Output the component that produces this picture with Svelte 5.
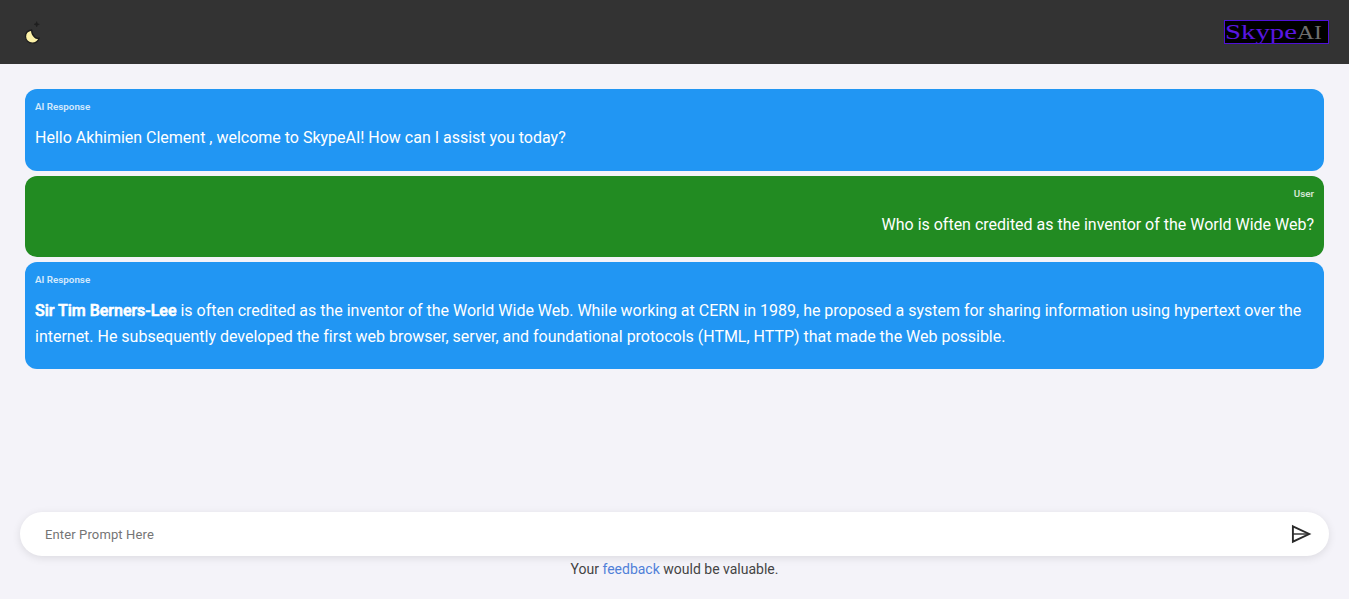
<script>
  const messages = [
    { role: 'ai', label: 'AI Response', html: 'Hello Akhimien Clement , welcome to SkypeAI! How can I assist you today?' },
    { role: 'user', label: 'User', html: 'Who is often credited as the inventor of the World Wide Web?' },
    { role: 'ai', label: 'AI Response', html: '<strong>Sir Tim Berners-Lee</strong> is often credited as the inventor of the World Wide Web. While working at CERN in 1989, he proposed a system for sharing information using hypertext over the internet. He subsequently developed the first web browser, server, and foundational protocols (HTML, HTTP) that made the Web possible.' }
  ];
</script>

<div class="page">
  <header class="topbar">
    <svg class="mark" width="20" height="26" viewBox="0 0 20 26" aria-hidden="true">
      <path d="M14.7 1.6 L15.4 3.6 L17.4 4.3 L15.4 5 L14.7 7 L14 5 L12 4.3 L14 3.6 Z" fill="#1f1f1f" stroke="#1f1f1f" stroke-width=".5"/>
      <path d="M9.7 10 C6 10.5 3.5 13 3.5 16.5 C3.5 20.3 6.5 23.2 10.3 23.2 C13.5 23.2 16.2 21 17.2 18 C15.5 18.6 13.8 18.2 12.6 17 C10.8 15.2 9.5 12.8 9.7 10 Z" fill="#fdf2a8" stroke="#1d1d1d" stroke-width="1.3" stroke-linejoin="round"/>
    </svg>
    <div class="brand"><span class="wordmark"><span class="sk">Skype</span><span class="ai">AI</span></span></div>
  </header>

  <main class="chat">
    {#each messages as m}
      <article class="bubble {m.role}">
        <div class="label">{m.label}</div>
        <p class="body">{@html m.html}</p>
      </article>
    {/each}
  </main>

  <footer class="composer">
    <div class="inputbar">
      <input type="text" placeholder="Enter Prompt Here" />
      <button type="button" aria-label="Send">
        <svg width="24" height="24" viewBox="0 0 24 24" aria-hidden="true">
          <path d="M3.9 4.3 L20.2 12 L3.9 19.7 Z" fill="none" stroke="#2b2b2b" stroke-width="1.9" stroke-linejoin="miter"/>
          <path d="M4 12 H20" fill="none" stroke="#2b2b2b" stroke-width="1.4"/>
        </svg>
      </button>
    </div>
    <p class="note">Your <a href="#feedback">feedback</a> would be valuable.</p>
  </footer>
</div>

<style>
  :global(body) {
    margin: 0;
    background: #f4f3f9;
    font-family: Roboto, "Liberation Sans", sans-serif;
  }
  .page {
    height: 599px;
    display: flex;
    flex-direction: column;
    overflow: hidden;
  }
  .topbar {
    height: 64px;
    flex: none;
    background: #333333;
    display: flex;
    align-items: center;
    justify-content: space-between;
    padding: 0 20px 0 22px;
    box-sizing: border-box;
  }
  .mark { display: block; margin-top: 2px; }
  .brand {
    width: 105px;
    height: 24px;
    box-sizing: border-box;
    border: 1px solid #4f10d8;
    background: #000;
    overflow: hidden;
  }
  .wordmark {
    display: block;
    font-family: "Liberation Serif", serif;
    font-size: 22px;
    line-height: 21px;
    white-space: nowrap;
    transform: scaleX(1.31);
    transform-origin: 0 0;
  }
  .sk { color: #5a16e0; }
  .ai { color: #6e6e6e; font-size: 18px; }
  .chat {
    flex: 1;
    padding: 25px 25px 0;
    display: flex;
    flex-direction: column;
    gap: 5px;
  }
  .bubble {
    border-radius: 12px;
    padding: 12px 10px 20px;
    color: #fff;
  }
  .bubble.ai { background: #2196f3; }
  .bubble.user { background: #228b22; text-align: right; }
  .label {
    font-size: 9.8px;
    font-weight: 600;
    line-height: 12px;
    opacity: 0.8;
  }
  .body {
    margin: 12px 0 0;
    font-size: 16px;
    line-height: 25.6px;
    letter-spacing: -0.01px;
  }
  .body :global(strong) {
    font-weight: 500;
    -webkit-text-stroke: 0.6px #fff;
  }
  .composer {
    flex: none;
    padding: 0 20px 22px;
  }
  .inputbar {
    height: 44px;
    background: #fff;
    border-radius: 22px;
    box-shadow: 0 2px 8px rgba(0, 0, 0, 0.1);
    display: flex;
    align-items: center;
    padding: 0 16px 0 25px;
  }
  input {
    flex: 1;
    border: 0;
    outline: 0;
    background: transparent;
    padding: 0;
    font: 400 13px Roboto, sans-serif;
    letter-spacing: 0.13px;
    color: #333;
  }
  input::placeholder { color: #757575; opacity: 1; }
  button {
    border: 0;
    background: none;
    padding: 0;
    width: 24px;
    height: 24px;
    display: block;
  }
  .note {
    margin: 5px 0 0;
    text-align: center;
    font-size: 14px;
    line-height: 16px;
    color: #444;
  }
  .note a { color: #5080d8; text-decoration: none; }
</style>
